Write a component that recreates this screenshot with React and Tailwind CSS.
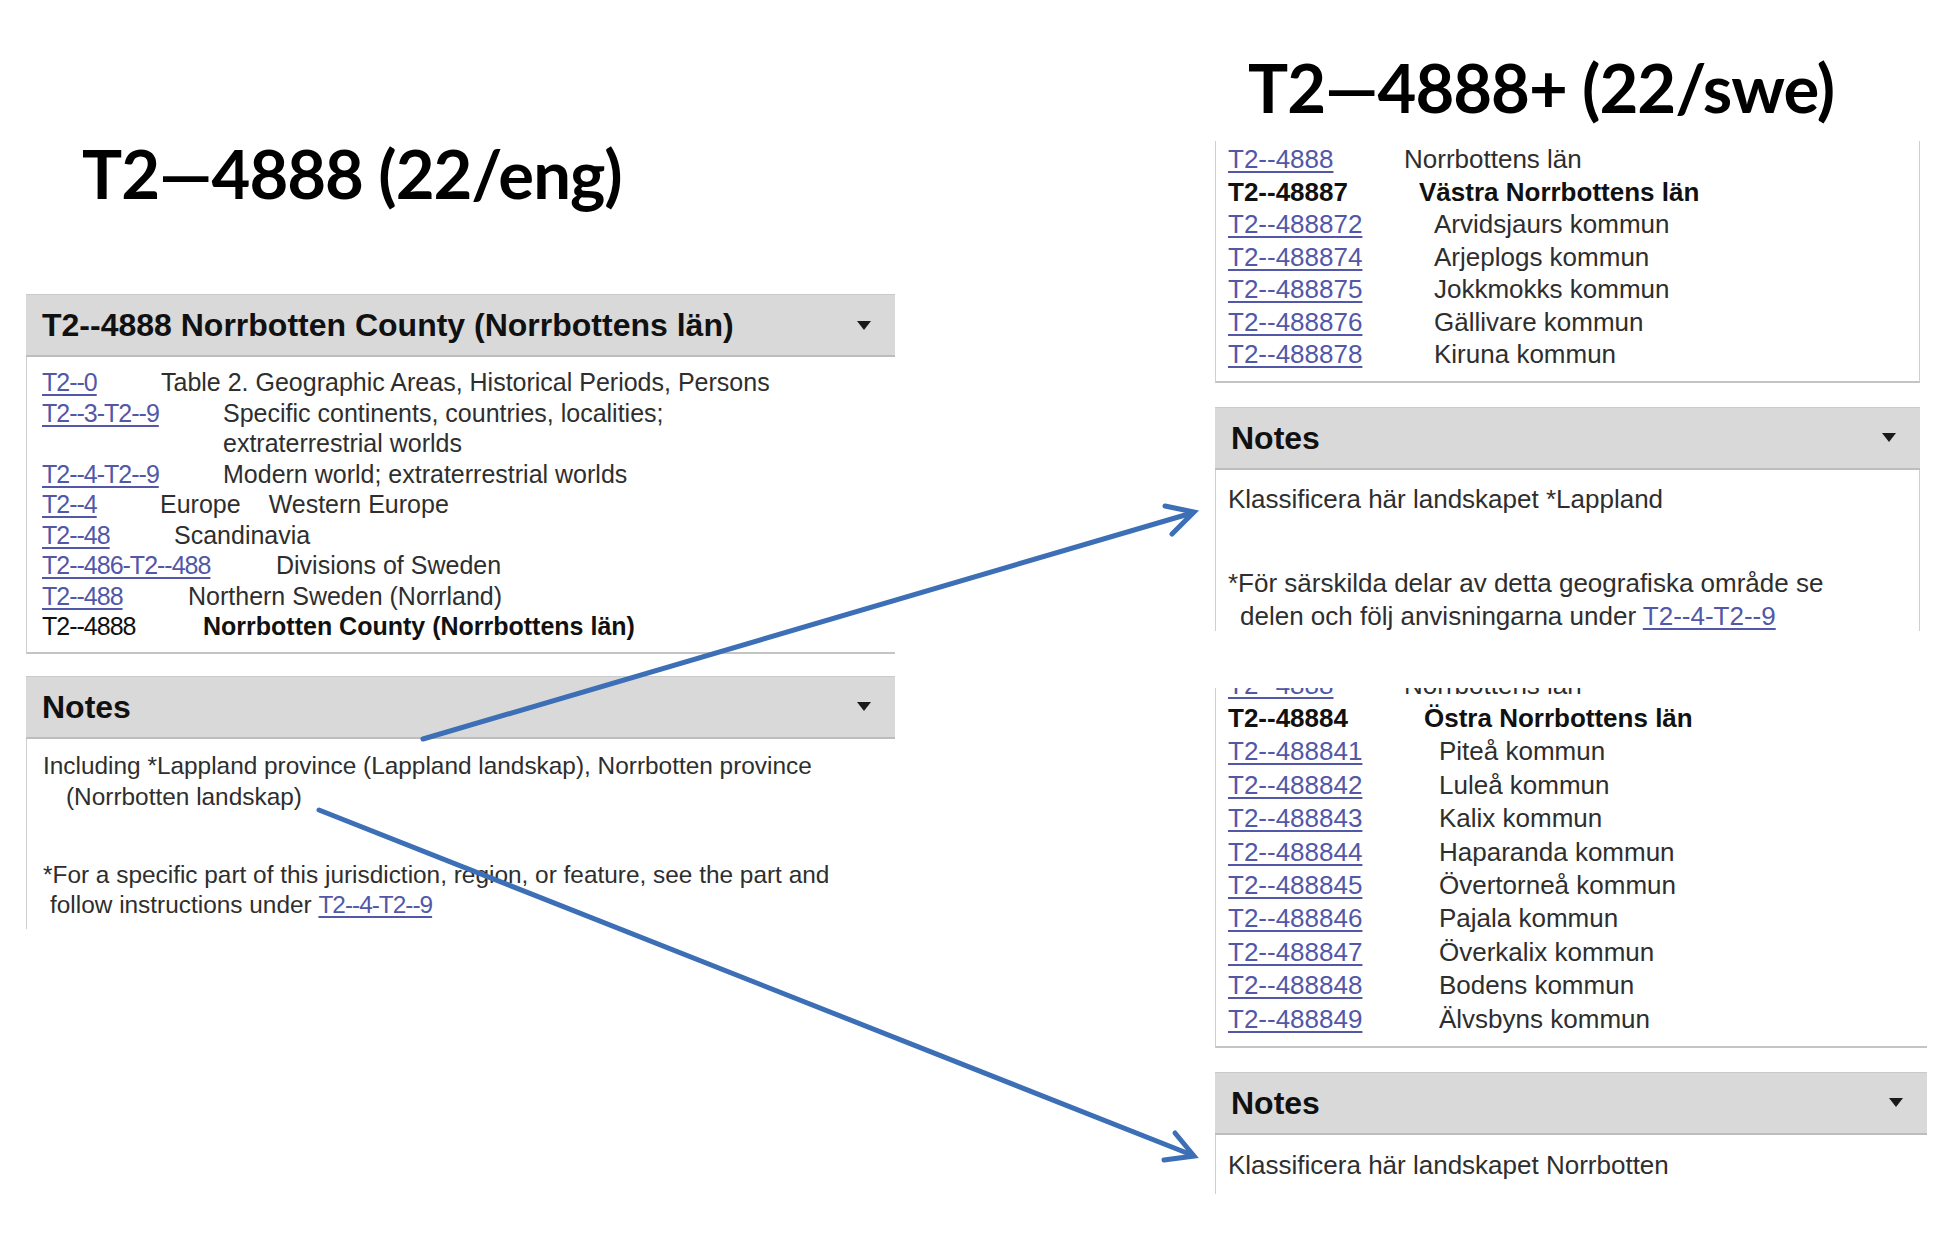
import React from "react";

const sans = "font-['Liberation_Sans',Arial,sans-serif]";

const leftRows = [
  { code: "T2--0", link: true, w: "w-[119px]", desc: "Table 2. Geographic Areas, Historical Periods, Persons" },
  { code: "T2--3-T2--9", link: true, w: "w-[181px]", desc: "Specific continents, countries, localities;" },
  { code: "", link: false, w: "w-[181px]", desc: "extraterrestrial worlds" },
  { code: "T2--4-T2--9", link: true, w: "w-[181px]", desc: "Modern world; extraterrestrial worlds" },
  { code: "T2--4", link: true, w: "w-[118px]", desc: "Europe", extra: "Western Europe" },
  { code: "T2--48", link: true, w: "w-[132px]", desc: "Scandinavia" },
  { code: "T2--486-T2--488", link: true, w: "w-[234px]", desc: "Divisions of Sweden" },
  { code: "T2--488", link: true, w: "w-[146px]", desc: "Northern Sweden (Norrland)" },
  { code: "T2--4888", link: false, w: "w-[161px]", desc: "Norrbotten County (Norrbottens län)", bold: true },
];

const westRows = [
  { code: "T2--4888", link: true, w: "w-[176px]", desc: "Norrbottens län" },
  { code: "T2--48887", link: false, w: "w-[191px]", desc: "Västra Norrbottens län", bold: true },
  { code: "T2--488872", link: true, w: "w-[206px]", desc: "Arvidsjaurs kommun" },
  { code: "T2--488874", link: true, w: "w-[206px]", desc: "Arjeplogs kommun" },
  { code: "T2--488875", link: true, w: "w-[206px]", desc: "Jokkmokks kommun" },
  { code: "T2--488876", link: true, w: "w-[206px]", desc: "Gällivare kommun" },
  { code: "T2--488878", link: true, w: "w-[206px]", desc: "Kiruna kommun" },
];

const eastRows = [
  { code: "T2--48884", link: false, w: "w-[196px]", desc: "Östra Norrbottens län", bold: true },
  { code: "T2--488841", link: true, w: "w-[211px]", desc: "Piteå kommun" },
  { code: "T2--488842", link: true, w: "w-[211px]", desc: "Luleå kommun" },
  { code: "T2--488843", link: true, w: "w-[211px]", desc: "Kalix kommun" },
  { code: "T2--488844", link: true, w: "w-[211px]", desc: "Haparanda kommun" },
  { code: "T2--488845", link: true, w: "w-[211px]", desc: "Övertorneå kommun" },
  { code: "T2--488846", link: true, w: "w-[211px]", desc: "Pajala kommun" },
  { code: "T2--488847", link: true, w: "w-[211px]", desc: "Överkalix kommun" },
  { code: "T2--488848", link: true, w: "w-[211px]", desc: "Bodens kommun" },
  { code: "T2--488849", link: true, w: "w-[211px]", desc: "Älvsbyns kommun" },
];

function Caret() {
  return (
    <svg width="14" height="9" viewBox="0 0 14 9" className="shrink-0">
      <polygon points="0,0 14,0 7,9" fill="#1a1a1a" />
    </svg>
  );
}

function Header({ children }) {
  return (
    <div className="h-[63px] flex items-center justify-between bg-[#d9d9d9] border-t border-t-[#cacaca] border-b-2 border-b-[#bdbdbd] pl-[16px] pr-[24px]">
      <span className="text-[32px] font-bold text-[#111]">{children}</span>
      <Caret />
    </div>
  );
}

// left side codes are set a bit tighter than the swedish ones
function Code({ text, link, tight = true, strong = false }) {
  const track = tight ? "tracking-[-1px]" : "";
  if (!link) {
    return <span className={`text-[#111] ${track} ${strong ? "font-bold" : ""}`}>{text}</span>;
  }
  return (
    <a className={`text-[#5257a8] underline underline-offset-[3px] ${track}`}>{text}</a>
  );
}

function Row({ row, lead, swe = false }) {
  return (
    <div className={`flex whitespace-nowrap ${lead}`}>
      <span className={`${row.w} shrink-0`}>
        <Code text={row.code} link={row.link} tight={!swe} strong={swe} />
      </span>
      <span className={row.bold ? "font-bold text-[#111]" : ""}>{row.desc}</span>
      {row.extra && <span className="ml-[28px]">{row.extra}</span>}
    </div>
  );
}

function Arrows() {
  return (
    <svg className="absolute inset-0 pointer-events-none" width="1960" height="1250" viewBox="0 0 1960 1250">
      <g stroke="#3c6fb5" strokeWidth="5" fill="none" strokeLinecap="round" strokeLinejoin="miter">
        <line x1="423" y1="739" x2="1192" y2="513" />
        <polyline points="1172,534 1194,512 1165,506" />
        <line x1="319" y1="810" x2="1192" y2="1155" />
        <polyline points="1164,1160 1194,1156 1175,1133" />
      </g>
    </svg>
  );
}

export default function App() {
  return (
    <div className={`relative w-[1960px] h-[1250px] overflow-hidden bg-white text-[#2e2e2e] ${sans}`}>
      <div className="flex items-start">

        {/* left: english edition */}
        <div className="ml-[26px] w-[869px] flex flex-col">
          <h1 className="pt-[140px] pl-[56px] font-['Lato',sans-serif] font-bold text-[67px] leading-none tracking-[-1px] text-black">
            T2—4888 (22/eng)
          </h1>

          <div className="mt-[87px]">
            <Header>T2--4888 Norrbotten County (Norrbottens län)</Header>
            <div className="border-l border-l-[#cfcfcf] border-b-2 border-b-[#c4c4c4] pl-[15px] pt-[10px] pb-[10px] text-[25px]">
              {leftRows.map((r, i) => (
                <Row key={i} row={r} lead="leading-[30.5px]" />
              ))}
            </div>
          </div>

          <div className="mt-[22px]">
            <Header>Notes</Header>
            <div className="h-[190px] border-l border-l-[#cfcfcf] pl-[16px] pt-[11px] text-[24.4px] leading-[31px] whitespace-nowrap">
              <div>Including *Lappland province (Lappland landskap), Norrbotten province</div>
              <div className="pl-[23px]">(Norrbotten landskap)</div>
              <div className="mt-[48px] leading-[30.5px]">
                *For a specific part of this jurisdiction, region, or feature, see the part and
              </div>
              <div className="pl-[7px] leading-[30.5px]">
                follow instructions under <Code text="T2--4-T2--9" link />
              </div>
            </div>
          </div>
        </div>

        {/* right: swedish edition */}
        <div className="ml-[320px] w-[745px] flex flex-col">
          <h1 className="mt-[54px] pl-[33px] font-['Lato',sans-serif] font-bold text-[67px] leading-none tracking-[-1px] text-black whitespace-nowrap">
            T2—4888+ (22/swe)
          </h1>

          <div className="mt-[20px] w-[705px] border-x border-x-[#cfcfcf] border-b-2 border-b-[#c4c4c4] pl-[12px] pt-[2px] pb-[10px] text-[26px]">
            {westRows.map((r, i) => (
              <Row key={i} row={r} lead="leading-[32.5px]" swe />
            ))}
          </div>

          <div className="mt-[24px] w-[705px]">
            <Header>Notes</Header>
            <div className="h-[161px] border-x border-x-[#cfcfcf] pl-[12px] pt-[13px] text-[26px] leading-[33px] whitespace-nowrap">
              <div>Klassificera här landskapet *Lappland</div>
              <div className="mt-[51px]">*För särskilda delar av detta geografiska område se</div>
              <div className="pl-[12px]">
                delen och följ anvisningarna under <Code text="T2--4-T2--9" link tight={false} />
              </div>
            </div>
          </div>

          <div className="mt-[57px] w-[712px] border-l border-l-[#cfcfcf] border-b-2 border-b-[#c4c4c4] pl-[12px] pb-[10px] text-[26px] overflow-hidden">
            <div className="-mt-[19px]">
              <Row row={{ code: "T2--4888", link: true, w: "w-[176px]", desc: "Norrbottens län" }} lead="leading-[33.4px]" swe />
            </div>
            {eastRows.map((r, i) => (
              <Row key={i} row={r} lead="leading-[33.4px]" swe />
            ))}
          </div>

          <div className="mt-[24px] w-[712px]">
            <Header>Notes</Header>
            <div className="h-[59px] border-l border-l-[#cfcfcf] pl-[12px] pt-[14px] text-[26px] leading-[33px] whitespace-nowrap">
              Klassificera här landskapet Norrbotten
            </div>
          </div>
        </div>
      </div>

      <Arrows />
    </div>
  );
}
